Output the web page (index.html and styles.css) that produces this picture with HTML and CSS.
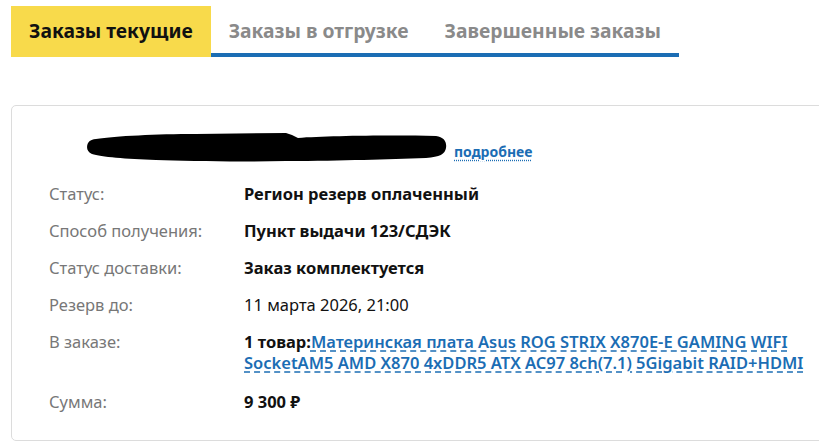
FILE: index.html
```html
<!DOCTYPE html>
<html lang="ru">
<head>
<meta charset="utf-8">
<title>Заказы</title>
<link rel="stylesheet" href="styles.css">
</head>
<body>
<div class="page">
  <nav class="tabs">
    <a class="tab tab-active">Заказы текущие</a>
    <a class="tab">Заказы в отгрузке</a>
    <a class="tab">Завершенные заказы</a>
  </nav>

  <section class="card">
    <div class="card-head">
      <svg class="redact" width="362" height="32" viewBox="0 0 362 32">
        <path d="M10 7 C30 4 70 2 110 2 L200 1 L206 3 L212 6 C240 4 300 3 350 4 C358 5 361 10 360 16 C359 22 354 25 340 26 C300 27 260 29 200 29 C150 30 100 29 70 28 C40 27 15 25 6 22 C1 20 0 15 2 11 C4 8 7 7 10 7 Z" fill="#000"/>
      </svg>
      <a class="more">подробнее</a>
    </div>

    <div class="rows">
      <div class="row">
        <div class="label">Статус:</div>
        <div class="value">Регион резерв оплаченный</div>
      </div>
      <div class="row">
        <div class="label">Способ получения:</div>
        <div class="value">Пункт выдачи 123/СДЭК</div>
      </div>
      <div class="row">
        <div class="label">Статус доставки:</div>
        <div class="value">Заказ комплектуется</div>
      </div>
      <div class="row">
        <div class="label">Резерв до:</div>
        <div class="value value-plain">11 марта 2026, 21:00</div>
      </div>
      <div class="row">
        <div class="label">В заказе:</div>
        <div class="value"><span class="count">1 товар:</span><a class="item-link">Материнская плата Asus ROG STRIX X870E-E GAMING WIFI SocketAM5 AMD X870 4xDDR5 ATX AC97 8ch(7.1) 5Gigabit RAID+HDMI</a></div>
      </div>
      <div class="row row-sum">
        <div class="label">Сумма:</div>
        <div class="value">9 300 ₽</div>
      </div>
    </div>
  </section>
</div>
</body>
</html>
```

FILE: styles.css
```css
html, body {
  margin: 0;
  padding: 0;
  overflow: hidden;
  background: #fff;
}

body {
  font-family: "Noto Sans", "Open Sans", sans-serif;
  color: #111;
}

.page {
  padding: 6px 0 0 11px;
  width: 840px;
}

.tabs {
  display: flex;
  align-items: flex-start;
}

.tab {
  box-sizing: border-box;
  height: 51px;
  padding: 12px 18px 0;
  font-size: 19.3px;
  font-weight: 700;
  line-height: 26px;
  color: #8a8a8a;
  border-bottom: 4px solid #1b6db4;
  white-space: nowrap;
}

.tab-active {
  background: #f8da4b;
  color: #111;
  border-bottom-color: #f8da4b;
}

.card {
  margin-top: 48px;
  box-sizing: border-box;
  width: 830px;
  height: 336px;
  border: 1px solid #dcdcdc;
  border-radius: 5px;
  padding: 26px 0 0 37px;
}

.card-head {
  display: flex;
  align-items: center;
  gap: 6px;
  margin-left: 37px;
  height: 32px;
}

.redact {
  display: block;
}

.more {
  font-size: 14px;
  font-weight: 700;
  color: #1b6db4;
  text-decoration: underline dotted;
  text-underline-offset: 3px;
  margin-top: 7px;
}

.rows {
  margin-top: 11px;
  display: flex;
  flex-direction: column;
}

.row {
  display: flex;
  padding: 8px 0;
  font-size: 16.5px;
  line-height: 21px;
}

.row-sum {
  margin-top: 2px;
}

.label {
  width: 195px;
  flex: none;
  color: #777;
}

.value {
  font-weight: 700;
  width: 570px;
}

.value-plain {
  font-weight: 400;
}

.item-link {
  color: #1b6db4;
  font-weight: 600;
  text-decoration: underline dashed;
  text-underline-offset: 3px;
}
```
